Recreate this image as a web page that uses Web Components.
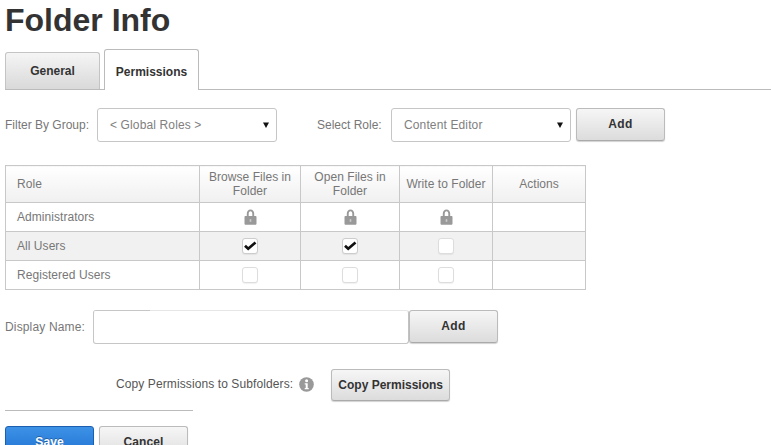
<!DOCTYPE html>
<html><head><meta charset="utf-8"><title>Folder Info</title>
<style>
html,body{margin:0;padding:0;background:#fff;overflow:hidden;height:445px}
body{font-family:"Liberation Sans",Arial,sans-serif;font-size:12px;color:#777}
</style></head><body>
<folder-page></folder-page>
<script>
function def(name, html){
  customElements.define(name, class extends HTMLElement{
    constructor(){super();this.attachShadow({mode:'open'}).innerHTML=html;}
  });
}
const LOCK=`<svg width="13" height="16" viewBox="0 0 13 16"><path fill="#999" fill-rule="evenodd" d="M2.800 7V4.800C2.800 2.200 4.300.4 6.500.4s3.700 1.800 3.700 4.400V7h1.300c.5 0 1 .4 1 1v6.800c0 .5-.5 1-1 1h-10c-.5 0-1-.5-1-1V8c0-.6.5-1 1-1zm1.900 0h3.600V4.800C8.300 3.200 7.600 2.200 6.500 2.200S4.700 3.200 4.700 4.800z"/><rect x="5.700" y="10.200" width="1.600" height="2.600" fill="#ccc"/></svg>`;

def('dnn-button',`<style>
:host{display:inline-flex;box-sizing:border-box;align-items:center;justify-content:center;height:33px;width:89px;border:1px solid #bbb;border-bottom-color:#aaa;border-radius:3px;background:linear-gradient(#f6f6f6,#dcdcdc);box-shadow:0 1px 1px rgba(0,0,0,.18);font:bold 12px "Liberation Sans",Arial,sans-serif;color:#333;letter-spacing:.1px;padding-bottom:2px;flex:none}
:host([primary]){background:linear-gradient(#3d92e6,#1d6fd0);border-color:#1c5fb0;color:#fff;text-shadow:0 -1px 0 rgba(0,0,0,.3)}
:host([wide]){width:119px;height:32px;padding-bottom:0;letter-spacing:0}
</style><slot></slot>`);

def('dnn-select',`<style>
:host{display:flex;box-sizing:border-box;width:180px;height:34px;border:1px solid #c6c6c6;border-radius:3px;background:#fff;align-items:center;justify-content:space-between;padding:0 7px 0 12px;color:#808080;font-size:12px;letter-spacing:.13px;flex:none}
svg{display:block}
</style><slot></slot><svg width="6" height="6" viewBox="0 0 6 6"><path d="M0 .5h6L3 6z" fill="#111"/></svg>`);

def('dnn-check',`<style>
:host{display:inline-block;box-sizing:border-box;width:16px;height:16px;border:1px solid #ddd;border-radius:3px;background:#fff;box-shadow:0 1px 1px rgba(0,0,0,.06);vertical-align:middle;position:relative}
svg{display:none;position:absolute;left:1px;top:2px}
:host([checked]) svg{display:block}
:host([checked]){border-color:#ccc}
</style><svg width="13" height="10" viewBox="0 0 13 10"><path d="M1 4.800l3.200 3L11.500 1.500" fill="none" stroke="#111" stroke-width="2.700"/></svg>`);

def('dnn-lock',`<style>:host{display:inline-block;width:13px;height:16px;vertical-align:middle}svg{display:block}</style>`+LOCK);

def('dnn-tabs',`<style>
:host{display:flex;box-sizing:border-box;align-items:flex-end;height:41px;margin-left:5px;border-bottom:1px solid #bbb;gap:4px}
.t{box-sizing:border-box;width:95px;display:flex;align-items:center;justify-content:center;font:bold 12px "Liberation Sans",Arial,sans-serif;color:#333;border:1px solid #c4c4c4;border-bottom:0;border-radius:3px 3px 0 0}
.g{height:37px;background:linear-gradient(#f5f5f5,#d9d9d9)}
.p{height:41px;background:#fff;margin-bottom:-1px;padding-top:3px;border-color:#bbb}
</style><div class="t g">General</div><div class="t p">Permissions</div>`);

def('perm-table',`<style>
:host{display:block;margin-left:5px;width:580px}
table{border-collapse:collapse;table-layout:fixed;width:580px;font:12px/14px "Liberation Sans",Arial,sans-serif;color:#777;letter-spacing:.05px}
td,th{border:1px solid #c8c8c8;padding:0;text-align:center;font-weight:normal}
th{height:36px;background:linear-gradient(#fff,#f0f0f0)}
td{height:28px}
.l{text-align:left;padding-left:11px}
.alt td{background:#f1f1f1}
</style>
<table><colgroup><col style="width:194px"><col style="width:101px"><col style="width:99px"><col style="width:93px"><col style="width:93px"></colgroup>
<tr><th class="l">Role</th><th>Browse Files in<br>Folder</th><th>Open Files in<br>Folder</th><th>Write to Folder</th><th>Actions</th></tr>
<tr><td class="l">Administrators</td><td><dnn-lock></dnn-lock></td><td><dnn-lock></dnn-lock></td><td><dnn-lock></dnn-lock></td><td></td></tr>
<tr class="alt"><td class="l">All Users</td><td><dnn-check checked></dnn-check></td><td><dnn-check checked></dnn-check></td><td><dnn-check></dnn-check></td><td></td></tr>
<tr><td class="l">Registered Users</td><td><dnn-check></dnn-check></td><td><dnn-check></dnn-check></td><td><dnn-check></dnn-check></td><td></td></tr>
</table>`);

def('folder-page',`<style>
:host{display:block;width:771px;height:445px;overflow:hidden;font:12px "Liberation Sans",Arial,sans-serif;color:#777}
h1{margin:0 0 0 5px;height:49px;font:bold 32px/40px "Liberation Sans",Arial,sans-serif;color:#333}
.filter{display:flex;align-items:flex-start;margin:18px 0 23px 5px}
.filter span{line-height:34px}
.name{display:flex;align-items:flex-start;margin:20px 0 0 5px}
.name span{line-height:34px;width:88px;flex:none;letter-spacing:.15px}
.input{box-sizing:border-box;width:316px;height:34px;border:1px solid #c6c6c6;border-top-color:transparent;border-radius:3px;background:linear-gradient(90deg,#c6c6c6 57px,#e6e6e6 57px) top/100% 1px no-repeat border-box,#fff}
.copy{display:flex;align-items:center;margin:25px 0 0 116px;height:32px;color:#555}
.copy span{margin-top:-3px;letter-spacing:.1px}
.info{margin:0 0 0 6px;display:block;flex:none;position:relative;top:-1px}
.hr{margin:9px 0 0 5px;width:188px;height:1px;background:#bbb}
.act{display:flex;gap:5px;margin:15px 0 0 5px}
</style>
<h1>Folder Info</h1>
<dnn-tabs></dnn-tabs>
<div class="filter">
  <span style="width:92px">Filter By Group:</span>
  <dnn-select>&lt; Global Roles &gt;</dnn-select>
  <span style="margin-left:40px;width:74px">Select Role:</span>
  <dnn-select>Content Editor</dnn-select>
  <dnn-button style="margin-left:5px;letter-spacing:.45px">Add</dnn-button>
</div>
<perm-table></perm-table>
<div class="name">
  <span>Display Name:</span>
  <div class="input"></div>
  <dnn-button style="letter-spacing:.45px">Add</dnn-button>
</div>
<div class="copy">
  <span>Copy Permissions to Subfolders:</span>
  <svg class="info" width="15" height="15" viewBox="0 0 15 15"><circle cx="7.500" cy="7.500" r="7.300" fill="#999"/><circle cx="7.600" cy="3.700" r="1.500" fill="#fff"/><path d="M5.700 6.200h3v4.800h1v1.300H5.700V11h1V7.500h-1z" fill="#fff"/></svg>
  <dnn-button wide style="margin-left:17px">Copy Permissions</dnn-button>
</div>
<div class="hr"></div>
<div class="act"><dnn-button primary>Save</dnn-button><dnn-button>Cancel</dnn-button></div>`);
</script>
</body></html>
